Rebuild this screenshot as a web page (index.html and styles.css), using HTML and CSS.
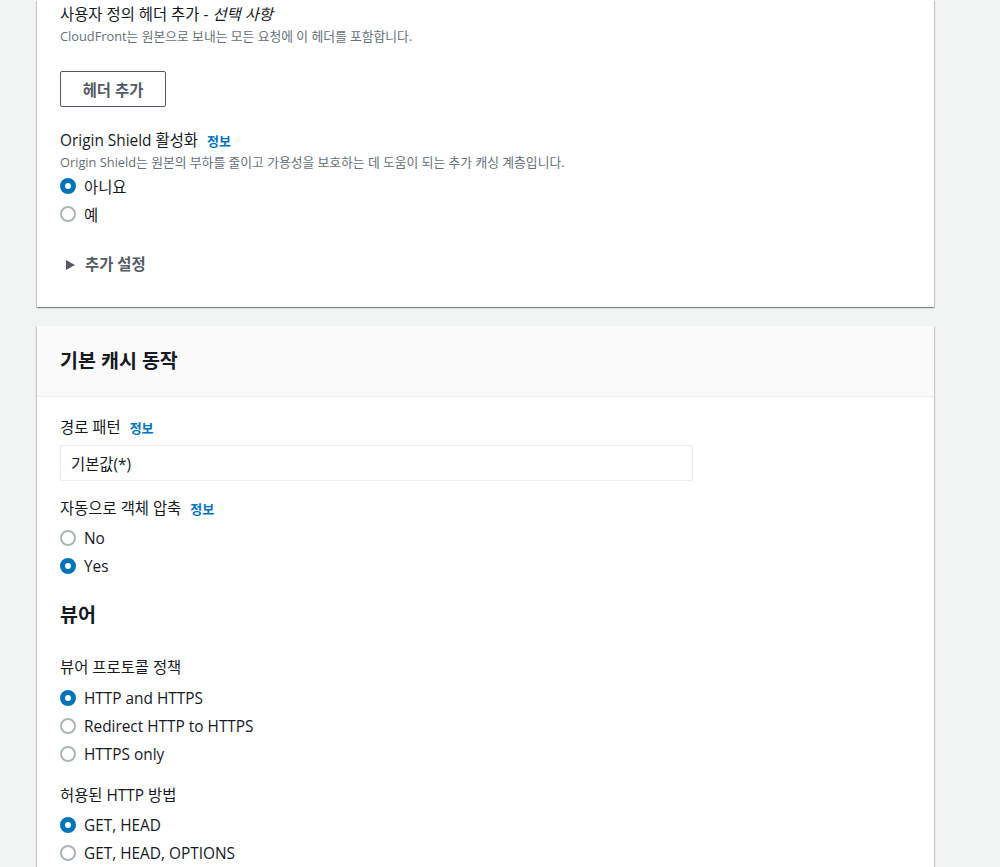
FILE: index.html
```html
<!DOCTYPE html>
<html lang="ko">
<head>
<meta charset="utf-8">
<link rel="stylesheet" href="styles.css">
</head>
<body>
<main class="page">
  <section class="card card-top">
    <div class="card-body body1">
      <div class="field">
        <div class="label">사용자 정의 헤더 추가 - <i>선택 사항</i></div>
        <div class="desc">CloudFront는 원본으로 보내는 모든 요청에 이 헤더를 포함합니다.</div>
      </div>
      <button class="btn">헤더 추가</button>
      <div class="field">
        <div class="label">Origin Shield 활성화 <a class="info">정보</a></div>
        <div class="desc">Origin Shield는 원본의 부하를 줄이고 가용성을 보호하는 데 도움이 되는 추가 캐싱 계층입니다.</div>
        <div class="radios r-first">
          <label class="radio"><span class="dot on"></span>아니요</label>
          <label class="radio"><span class="dot"></span>예</label>
        </div>
      </div>
      <div class="expander"><span class="caret"></span>추가 설정</div>
    </div>
  </section>

  <section class="card card-main">
    <header class="card-head"><h2>기본 캐시 동작</h2></header>
    <div class="card-body body2">
      <div class="field">
        <div class="label">경로 패턴 <a class="info">정보</a></div>
        <div class="input">기본값(*)</div>
      </div>
      <div class="field f-compress">
        <div class="label">자동으로 객체 압축 <a class="info">정보</a></div>
        <div class="radios">
          <label class="radio"><span class="dot"></span>No</label>
          <label class="radio"><span class="dot on"></span>Yes</label>
        </div>
      </div>
      <h3 class="sub">뷰어</h3>
      <div class="field f-viewer">
        <div class="label">뷰어 프로토콜 정책</div>
        <div class="radios r-viewer">
          <label class="radio"><span class="dot on"></span>HTTP and HTTPS</label>
          <label class="radio"><span class="dot"></span>Redirect HTTP to HTTPS</label>
          <label class="radio"><span class="dot"></span>HTTPS only</label>
        </div>
      </div>
      <div class="field f-methods">
        <div class="label">허용된 HTTP 방법</div>
        <div class="radios">
          <label class="radio"><span class="dot on"></span>GET, HEAD</label>
          <label class="radio"><span class="dot"></span>GET, HEAD, OPTIONS</label>
        </div>
      </div>
    </div>
  </section>
</main>
</body>
</html>
```

FILE: styles.css
```css
* { box-sizing: border-box; }
html, body {
  margin: 0;
  background: #f2f3f3;
  font-family: "Open Sans", "Noto Sans CJK KR", sans-serif;
  color: #16191f;
  font-size: 15.4px;
}
.page {
  width: 897px;
  margin-left: 37px;
  display: flex;
  flex-direction: column;
  gap: 19px;
}
.card {
  background: #fff;
  box-shadow: 0 1px 1px 0 rgba(0,28,36,.3), 1px 1px 1px 0 rgba(0,28,36,.15), -1px 1px 1px 0 rgba(0,28,36,.15);
}
.card-top { height: 307px; }
.card-body {
  padding: 0 23px;
  display: flex;
  flex-direction: column;
  align-items: flex-start;
}
.body1 { padding-top: 4px; }
.field { display: flex; flex-direction: column; align-items: stretch; width: 100%; }
.label {
  font-size: 15.4px;
  line-height: 22px;
  display: flex;
  align-items: center;
  white-space: pre;
}
.label i { font-style: italic; }
.info {
  color: #0073bb;
  font-weight: 700;
  font-size: 13px;
  margin-left: 5px;
}
.desc {
  font-size: 12.8px;
  line-height: 20px;
  color: #687078;
}
.btn {
  margin-top: 25px;
  margin-bottom: 23px;
  height: 36px;
  width: 106px;
  background: #fff;
  border: 1px solid #545b64;
  border-radius: 2px;
  color: #545b64;
  font-family: inherit;
  font-weight: 700;
  font-size: 15.4px;
  padding: 0;
}
.radios { display: flex; flex-direction: column; margin-top: 4px; }
.radios.r-first { margin-top: 0; }
.radios.r-viewer { margin-top: 5px; }
.radio {
  height: 28px;
  display: flex;
  align-items: center;
  gap: 8px;
  font-size: 15.4px;
}
.dot {
  width: 16px;
  height: 16px;
  border-radius: 50%;
  border: 2px solid #aab7b8;
  background: #fff;
  flex: none;
}
.dot.on {
  border: 5px solid #0073bb;
}
.expander {
  margin-top: 26px;
  margin-left: 6px;
  display: flex;
  align-items: center;
  gap: 10px;
  color: #545b64;
  font-weight: 700;
  line-height: 22px;
}
.caret {
  width: 0;
  height: 0;
  border-left: 9px solid #545b64;
  border-top: 5.5px solid transparent;
  border-bottom: 5.5px solid transparent;
}
.card-main { height: 560px; }
.card-head {
  height: 71px;
  background: #fafafa;
  border-bottom: 1px solid #eaeded;
  padding: 0 23px;
  display: flex;
  align-items: center;
}
.card-head h2, .sub {
  margin: 0;
  font-size: 19.5px;
  font-weight: 700;
  line-height: 26px;
}
.body2 { padding-top: 20px; }
.input {
  margin-top: 6px;
  width: 633px;
  height: 36px;
  border: 1px solid #eaeded;
  border-radius: 2px;
  padding: 0 10px;
  display: flex;
  align-items: center;
  font-size: 15.4px;
}
.f-compress { margin-top: 17px; }
.sub { margin-top: 22px; }
.f-viewer { margin-top: 29px; }
.f-methods { margin-top: 17px; }
```
